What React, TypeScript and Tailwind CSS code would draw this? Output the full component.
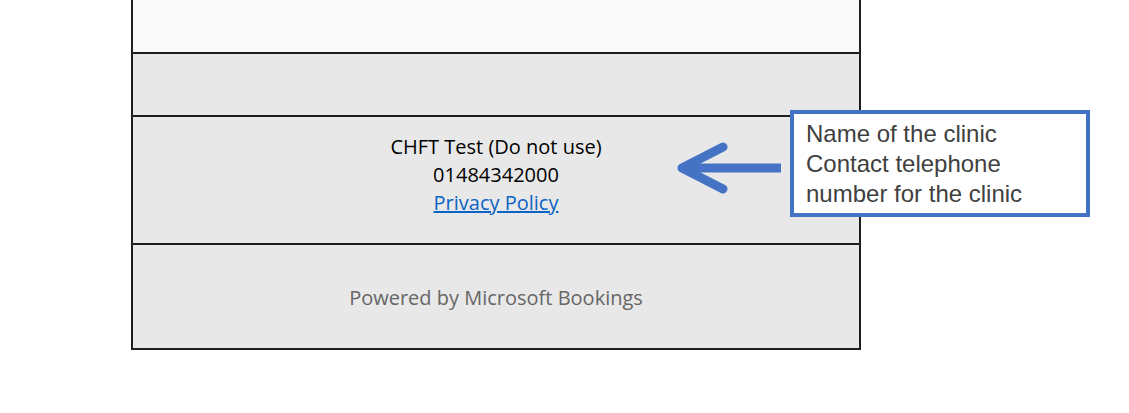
import React from 'react'

const Arrow = () => (
  <svg
    className="absolute left-[676px] top-[140px]"
    width="110"
    height="56"
    viewBox="0 0 110 56"
    fill="none"
  >
    <path d="M8 28 H105" stroke="#4472c4" strokeWidth="9" strokeLinecap="butt" />
    <path
      d="M47 7 L6 28 L47 49"
      stroke="#4472c4"
      strokeWidth="9"
      strokeLinecap="round"
      strokeLinejoin="round"
    />
  </svg>
)

export default function App() {
  return (
    <div className="relative w-[1129px] h-[413px] bg-white overflow-hidden">
      <div className="ml-[131px] w-[730px] border-x-2 border-b-2 border-[#1e1e1e] font-['Open_Sans',sans-serif]">
        <div className="h-[52px] bg-[#fafafa]" />
        <div className="h-[63px] bg-[#e8e8e8] border-t-2 border-[#1e1e1e]" />
        <div className="h-[128px] bg-[#e8e8e8] border-t-2 border-[#1e1e1e] flex flex-col items-center pt-[16px] text-[20px] leading-[28px] text-black">
          <div>CHFT Test (Do not use)</div>
          <div>01484342000</div>
          <a href="#" className="text-[#0b63c5] underline">
            Privacy Policy
          </a>
        </div>
        <div className="h-[105px] bg-[#e8e8e8] border-t-2 border-[#1e1e1e] flex items-center justify-center pt-[2px] text-[20px] text-[#666666]">
          Powered by Microsoft Bookings
        </div>
      </div>

      <Arrow />

      <div className="absolute left-[790px] top-[110px] w-[300px] h-[107px] border-4 border-[#4472c4] bg-white pl-[12px] pt-[5px] font-['Liberation_Sans',Arial,sans-serif] text-[24px] leading-[30px] text-[#404040] whitespace-nowrap">
        <div>Name of the clinic</div>
        <div>Contact telephone</div>
        <div>number for the clinic</div>
      </div>
    </div>
  )
}
